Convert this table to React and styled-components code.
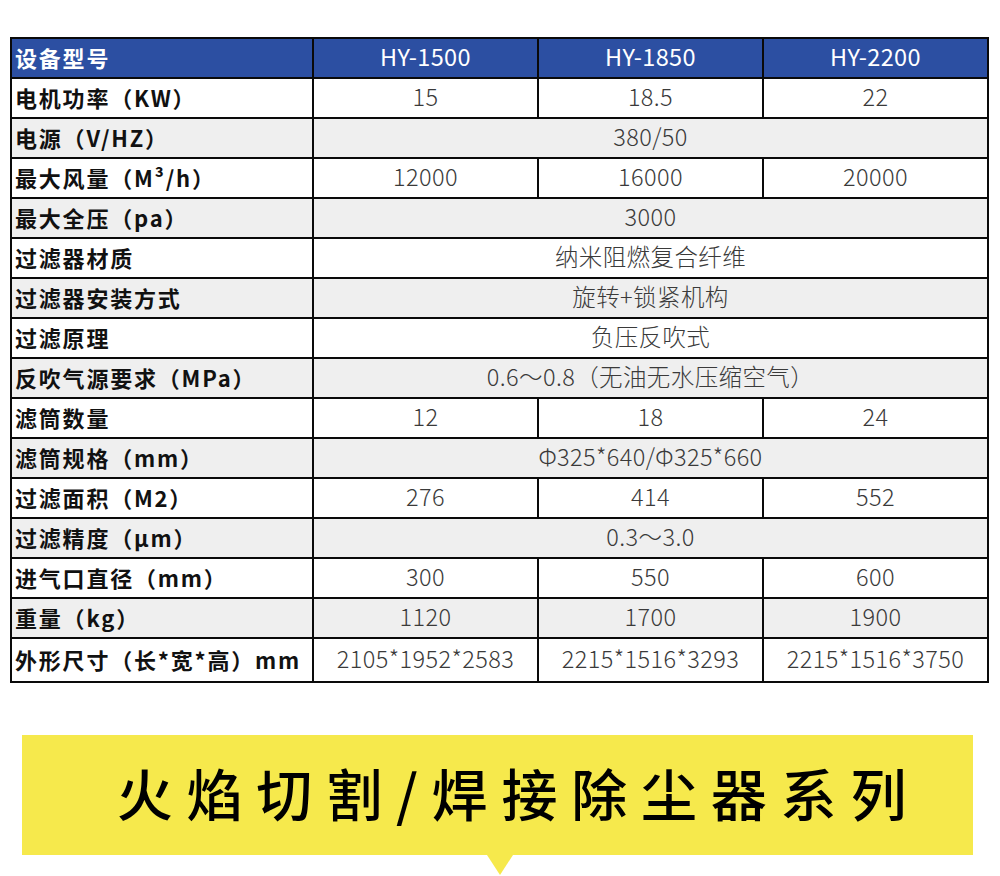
import React from "react";
import styled, { createGlobalStyle } from "styled-components";

const GlobalStyle = createGlobalStyle`
  html, body {
    margin: 0;
    padding: 0;
    background: #ffffff;
    font-family: "Noto Sans CJK SC", "Noto Sans", sans-serif;
  }
`;

const Page = styled.div`
  width: 1000px;
  height: 876px;
  overflow: hidden;
  display: flex;
  flex-direction: column;
  padding-top: 37px;
  box-sizing: border-box;
`;

const Table = styled.div`
  margin-left: 10px;
  width: max-content;
  display: grid;
  grid-template-columns: 300px repeat(3, 223px);
  grid-template-rows: repeat(15, 38px) 42px;
  gap: 2px;
  padding: 2px;
  background: #0a0a0a;
`;

const Cell = styled.div`
  display: flex;
  align-items: center;
  justify-content: ${(p) => (p.$label ? "flex-start" : "center")};
  padding: ${(p) => (p.$label ? "0 0 2px 3px" : "0 0 2px 0")};
  grid-column: ${(p) => (p.$span ? `span ${p.$span}` : "auto")};
  background: ${(p) =>
    p.$head ? "#2c4fa2" : p.$alt ? "#efefef" : "#ffffff"};
  color: ${(p) => (p.$head ? "#ffffff" : p.$label ? "#111111" : "#3a3a3a")};
  font-size: ${(p) => (p.$label ? "22px" : "23.5px")};
  font-weight: ${(p) => (p.$label ? 700 : p.$head ? 400 : 300)};
  letter-spacing: ${(p) => (p.$label ? "1.8px" : "0.4px")};
  white-space: nowrap;
  line-height: 1;
`;

const BannerWrap = styled.div`
  margin-top: 52px;
  margin-left: 22px;
  width: 951px;
  display: flex;
  flex-direction: column;
`;

const Banner = styled.div`
  height: 120px;
  background: #f6e94c;
  display: flex;
  align-items: center;
  justify-content: center;
  padding-left: 42px;
  padding-bottom: 6px;
  box-sizing: border-box;
`;

const Title = styled.h1`
  margin: 0;
  font-family: "Noto Sans CJK SC", sans-serif;
  font-weight: 500;
  font-size: 56px;
  letter-spacing: 13.8px;
  color: #000000;
  line-height: 1;
`;

const Pointer = styled.div`
  margin-left: 465px;
  width: 0;
  height: 0;
  border-left: 13px solid transparent;
  border-right: 13px solid transparent;
  border-top: 20px solid #f6e94c;
`;

const rows = [
  ["电机功率（KW）", ["15", "18.5", "22"]],
  ["电源（V/HZ）", "380/50"],
  ["最大风量（M³/h）", ["12000", "16000", "20000"]],
  ["最大全压（pa）", "3000"],
  ["过滤器材质", "纳米阻燃复合纤维"],
  ["过滤器安装方式", "旋转+锁紧机构"],
  ["过滤原理", "负压反吹式"],
  ["反吹气源要求（MPa）", "0.6～0.8（无油无水压缩空气）"],
  ["滤筒数量", ["12", "18", "24"]],
  ["滤筒规格（mm）", "Φ325*640/Φ325*660"],
  ["过滤面积（M2）", ["276", "414", "552"]],
  ["过滤精度（μm）", "0.3～3.0"],
  ["进气口直径（mm）", ["300", "550", "600"]],
  ["重量（kg）", ["1120", "1700", "1900"]],
  ["外形尺寸（长*宽*高）mm", ["2105*1952*2583", "2215*1516*3293", "2215*1516*3750"]],
];

export default function App() {
  return (
    <Page>
      <GlobalStyle />
      <Table>
        <Cell $head $label>设备型号</Cell>
        <Cell $head>HY-1500</Cell>
        <Cell $head>HY-1850</Cell>
        <Cell $head>HY-2200</Cell>
        {rows.map(([label, vals], i) => {
          const alt = i % 2 === 1;
          return (
            <React.Fragment key={label}>
              <Cell $label $alt={alt}>{label}</Cell>
              {Array.isArray(vals) ? (
                vals.map((v, j) => (
                  <Cell key={j} $alt={alt}>{v}</Cell>
                ))
              ) : (
                <Cell $span={3} $alt={alt}>{vals}</Cell>
              )}
            </React.Fragment>
          );
        })}
      </Table>
      <BannerWrap>
        <Banner>
          <Title>火焰切割/焊接除尘器系列</Title>
        </Banner>
        <Pointer />
      </BannerWrap>
    </Page>
  );
}
